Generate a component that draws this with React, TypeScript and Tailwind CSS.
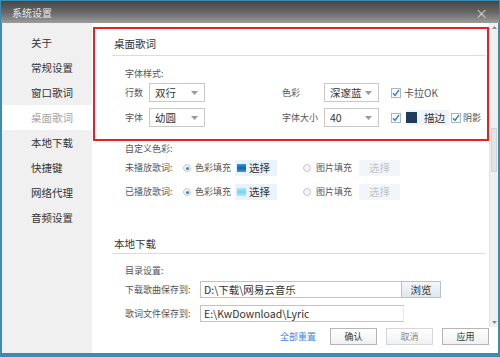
import { ReactNode } from 'react';

const font = { fontFamily: '"Noto Sans CJK SC", "Noto Sans", sans-serif' };

const navItems = ['关于', '常规设置', '窗口歌词', '桌面歌词', '本地下载', '快捷键', '网络代理', '音频设置'];

const Caret = () => (
  <svg width="7" height="4" viewBox="0 0 7 4" className="shrink-0">
    <path d="M0 0 L7 0 L3.5 4 Z" fill="#9a9a9a" />
  </svg>
);

const Select = ({ value, width }: { value: string; width: string }) => (
  <div className={`${width} h-[19px] flex items-center justify-between border border-[#c9c9c9] bg-white pl-[5px] pr-[6px] text-[10.5px] text-[#333]`}>
    <span>{value}</span>
    <Caret />
  </div>
);

const Check = () => (
  <div className="w-[10px] h-[10px] border border-[#a9b7c6] bg-white flex items-center justify-center shrink-0">
    <svg width="8" height="8" viewBox="0 0 8 8">
      <path d="M1 4.2 L3 6.4 L7 1" fill="none" stroke="#2f7fd4" strokeWidth="1.4" />
    </svg>
  </div>
);

const Radio = ({ on }: { on?: boolean }) => (
  <div className="w-[8px] h-[8px] rounded-full border border-[#c8c8c8] bg-[#f4f4f4] flex items-center justify-center shrink-0">
    {on && <div className="w-[3px] h-[3px] rounded-full bg-[#2f7fd4]" />}
  </div>
);

const Label = ({ children, className = '' }: { children: ReactNode; className?: string }) => (
  <span className={`text-[9px] leading-[12px] text-[#555] ${className}`}>{children}</span>
);

const ColorRow = ({ label, swatch }: { label: string; swatch: ReactNode }) => (
  <div className="flex items-center h-[16px]">
    <Label className="w-[58px]">{label}</Label>
    <Radio on />
    <Label className="ml-[4px] w-[40px]">色彩填充</Label>
    <div className="flex items-center gap-[3px] h-[16px] w-[42px] bg-[#eaf3fb] pl-[2px]">
      {swatch}
      <span className="text-[10.5px] text-[#333]">选择</span>
    </div>
    <div className="w-[26px]" />
    <Radio />
    <Label className="ml-[5px] w-[43px]">图片填充</Label>
    <div className="w-[41px] h-[16px] bg-[#f2f6fa] flex items-center justify-center text-[10.5px] text-[#c3c3c3]">选择</div>
  </div>
);

const Btn = ({ children, faded }: { children: ReactNode; faded?: boolean }) => (
  <div className={`w-[47px] h-[17px] flex items-center justify-center border text-[9px] bg-gradient-to-b from-white to-[#eef0f2] ${faded ? 'border-[#d6d6d6] text-[#8a8a8a]' : 'border-[#b5b5b5] text-[#333]'}`}>
    {children}
  </div>
);

export default function App() {
  return (
    <div className="w-[500px] h-[357px] flex flex-col bg-[#3a8db0] overflow-hidden" style={font}>
      {/* Title bar */}
      <div className="h-[22px] mt-[1px] mx-[1px] flex items-center justify-between px-[11px] bg-gradient-to-b from-[#474747] via-[#666] to-[#9c9c9c]">
        <span className="text-[10px] text-[#e8e8e8]">系统设置</span>
        <span className="text-[13px] leading-none text-[#d8d8d8]">×</span>
      </div>

      <div className="flex flex-1 ml-[2px] mr-[2px] mb-[4px] bg-white">
        {/* Sidebar */}
        <div className="w-[90px] bg-[#f0f0f0] pt-[7px]">
          {navItems.map((item) => (
            <div
              key={item}
              className={`h-[25px] flex items-center pl-[29px] text-[10.5px] ${item === '桌面歌词' ? 'bg-white text-[#a5a5a5]' : 'text-[#333]'}`}
            >
              {item}
            </div>
          ))}
        </div>

        {/* Main */}
        <div className="flex-1 flex flex-col">
          <div className="h-[304px] flex">
            <div className="flex-1 flex flex-col">
              {/* Desktop lyrics (highlighted) */}
              <div className="mt-[4px] ml-[1px] border-2 border-[#e32228] h-[114px] pt-[8px]">
                <div className="ml-[19px] text-[10.5px] text-[#333] h-[14px] leading-[14px]">桌面歌词</div>
                <div className="ml-[17px] mr-[1px] mt-[4px] h-px bg-[#dcdcdc]" />
                <div className="pl-[30px] mt-[12px] flex flex-col">
                  <Label className="h-[12px]">字体样式:</Label>
                  <div className="flex items-center mt-[3px]">
                    <Label className="w-[24px]">行数</Label>
                    <Select value="双行" width="w-[56px]" />
                    <div className="w-[77px]" />
                    <Label className="w-[42px]">色彩</Label>
                    <Select value="深邃蓝" width="w-[55px]" />
                    <div className="ml-[12px] flex items-center gap-[3px]">
                      <Check />
                      <span className="text-[10px] text-[#555]">卡拉OK</span>
                    </div>
                  </div>
                  <div className="flex items-center mt-[6px]">
                    <Label className="w-[24px]">字体</Label>
                    <Select value="幼圆" width="w-[56px]" />
                    <div className="w-[77px]" />
                    <Label className="w-[42px]">字体大小</Label>
                    <Select value="40" width="w-[55px]" />
                    <div className="ml-[12px] flex items-center">
                      <Check />
                      <div className="ml-[5px] flex items-center h-[15px] bg-[#eef4fa] pr-[4px]">
                        <div className="w-[11px] h-[11px] bg-[#1e3b5c]" />
                        <span className="ml-[7px] text-[10.5px] text-[#333]">描边</span>
                      </div>
                      <div className="ml-[2px] flex items-center gap-[2px]">
                        <Check />
                        <span className="text-[9px] text-[#555]">阴影</span>
                      </div>
                    </div>
                  </div>
                </div>
              </div>

              {/* Custom colours */}
              <div className="pl-[33px] mt-[2px] flex flex-col">
                <Label className="h-[12px]">自定义色彩:</Label>
                <div className="mt-[5px] flex flex-col gap-[8px]">
                  <ColorRow
                    label="未播放歌词:"
                    swatch={<div className="w-[9px] h-[8px] bg-gradient-to-b from-[#3b9be0] via-[#0d62b0] to-[#3b9be0]" />}
                  />
                  <ColorRow
                    label="已播放歌词:"
                    swatch={<div className="w-[9px] h-[8px] bg-gradient-to-b from-[#a8ecfa] via-[#6fd3f0] to-[#a8ecfa]" />}
                  />
                </div>
              </div>

              {/* Local download */}
              <div className="ml-[22px] mt-[37px] text-[10.5px] text-[#333] h-[14px] leading-[14px]">本地下载</div>
              <div className="ml-[20px] mr-[3px] mt-[2px] h-px bg-[#dcdcdc]" />
              <div className="pl-[33px] mt-[11px] flex flex-col">
                <Label className="h-[12px]">目录设置:</Label>
                <div className="flex items-center mt-[4px]">
                  <Label className="w-[75px]">下载歌曲保存到:</Label>
                  <div className="w-[202px] h-[17px] border border-[#c3c3c3] flex items-center pl-[3px] text-[10.5px] text-[#333]">
                    D:\下载\网易云音乐
                  </div>
                  <div className="w-[39px] h-[17px] border border-[#b8c2cc] border-l-0 bg-gradient-to-b from-[#f4f7fa] to-[#dfe6ee] flex items-center justify-center text-[10.5px] text-[#333]">
                    浏览
                  </div>
                </div>
                <div className="flex items-center mt-[7px]">
                  <Label className="w-[75px]">歌词文件保存到:</Label>
                  <div className="w-[204px] h-[17px] border border-[#c3c3c3] border-r-[#e8e8e8] flex items-center pl-[3px] text-[10.5px] text-[#333]">
                    E:\KwDownload\Lyric
                  </div>
                </div>
              </div>
            </div>

            {/* Scrollbar */}
            <div className="w-[9px] bg-[#f0f0f0] border-l border-[#e2e2e2] flex flex-col items-center">
              <svg width="5" height="3" viewBox="0 0 5 3" className="mt-[3px]">
                <path d="M0 3 L5 3 L2.5 0 Z" fill="#8a8a8a" />
              </svg>
              <div className="mt-[99px] w-[6px] h-[44px] bg-[#e3e3e3] border border-[#d2d2d2]" />
              <div className="flex-1" />
              <svg width="5" height="3" viewBox="0 0 5 3" className="mb-[3px]">
                <path d="M0 0 L5 0 L2.5 3 Z" fill="#8a8a8a" />
              </svg>
            </div>
          </div>

          {/* Bottom bar */}
          <div className="flex items-center justify-end pr-[9px] pt-[1px] gap-[9px]">
            <span className="text-[9px] text-[#3a8ad6] mr-[5px]">全部重置</span>
            <Btn>确认</Btn>
            <Btn faded>取消</Btn>
            <Btn>应用</Btn>
          </div>
        </div>
      </div>
    </div>
  );
}
